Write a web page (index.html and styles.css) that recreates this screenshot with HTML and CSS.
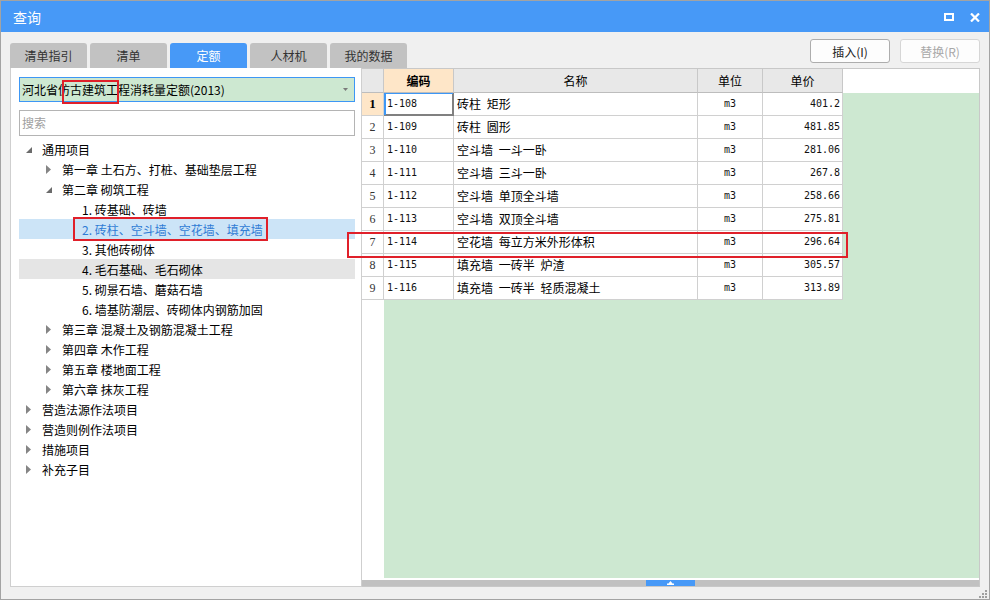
FILE: index.html
```html
<!DOCTYPE html>
<html lang="zh">
<head>
<meta charset="utf-8">
<title>查询</title>
<link rel="stylesheet" href="styles.css">
</head>
<body>
<div class="window">
  <div class="titlebar">
    <span class="title">查询</span>
    <div class="win-btns">
      <svg class="ic" width="10" height="8" viewBox="0 0 10 8"><rect x="1" y="1" width="8" height="6" fill="none" stroke="#fff" stroke-width="2"/></svg>
      <svg class="ic" width="10" height="9" viewBox="0 0 10 9"><path d="M1 0.5 L9 8.5 M9 0.5 L1 8.5" stroke="#fff" stroke-width="2.2" fill="none"/></svg>
    </div>
  </div>
  <div class="content">
    <div class="toolbar">
      <div class="tabs">
        <div class="tab">清单指引</div>
        <div class="tab">清单</div>
        <div class="tab active">定额</div>
        <div class="tab">人材机</div>
        <div class="tab">我的数据</div>
      </div>
      <div class="actions">
        <button class="btn">插入(I)</button>
        <button class="btn disabled">替换(R)</button>
      </div>
    </div>
    <div class="main">
      <div class="left">
        <div class="combo">
          <span>河北省仿古建筑工程消耗量定额(2013)</span>
          <svg class="combo-arrow" width="5" height="3" viewBox="0 0 5 3"><polygon points="0,0 5,0 2.5,3" fill="#7a7a7a"/></svg>
        </div>
        <div class="search">搜索</div>
        <ul class="tree">
          <li class="node l0"><span class="tg"><svg class="exp" width="6" height="6" viewBox="0 0 6 6"><polygon points="6,0 6,6 0,6" fill="#6b6b6b"/></svg></span>通用项目</li>
          <li class="node l1"><span class="tg"><svg class="col" width="5" height="9" viewBox="0 0 5 9"><polygon points="0,0 5,4.5 0,9" fill="#858585"/></svg></span>第一章 土石方、打桩、基础垫层工程</li>
          <li class="node l1"><span class="tg"><svg class="exp" width="6" height="6" viewBox="0 0 6 6"><polygon points="6,0 6,6 0,6" fill="#6b6b6b"/></svg></span>第二章 砌筑工程</li>
          <li class="node l2"><span class="tg"></span>1. 砖基础、砖墙</li>
          <li class="node l2 selected"><span class="tg"></span>2. 砖柱、空斗墙、空花墙、填充墙</li>
          <li class="node l2"><span class="tg"></span>3. 其他砖砌体</li>
          <li class="node l2 hover"><span class="tg"></span>4. 毛石基础、毛石砌体</li>
          <li class="node l2"><span class="tg"></span>5. 砌景石墙、蘑菇石墙</li>
          <li class="node l2"><span class="tg"></span>6. 墙基防潮层、砖砌体内钢筋加固</li>
          <li class="node l1"><span class="tg"><svg class="col" width="5" height="9" viewBox="0 0 5 9"><polygon points="0,0 5,4.5 0,9" fill="#858585"/></svg></span>第三章 混凝土及钢筋混凝土工程</li>
          <li class="node l1"><span class="tg"><svg class="col" width="5" height="9" viewBox="0 0 5 9"><polygon points="0,0 5,4.5 0,9" fill="#858585"/></svg></span>第四章 木作工程</li>
          <li class="node l1"><span class="tg"><svg class="col" width="5" height="9" viewBox="0 0 5 9"><polygon points="0,0 5,4.5 0,9" fill="#858585"/></svg></span>第五章 楼地面工程</li>
          <li class="node l1"><span class="tg"><svg class="col" width="5" height="9" viewBox="0 0 5 9"><polygon points="0,0 5,4.5 0,9" fill="#858585"/></svg></span>第六章 抹灰工程</li>
          <li class="node l0"><span class="tg"><svg class="col" width="5" height="9" viewBox="0 0 5 9"><polygon points="0,0 5,4.5 0,9" fill="#858585"/></svg></span>营造法源作法项目</li>
          <li class="node l0"><span class="tg"><svg class="col" width="5" height="9" viewBox="0 0 5 9"><polygon points="0,0 5,4.5 0,9" fill="#858585"/></svg></span>营造则例作法项目</li>
          <li class="node l0"><span class="tg"><svg class="col" width="5" height="9" viewBox="0 0 5 9"><polygon points="0,0 5,4.5 0,9" fill="#858585"/></svg></span>措施项目</li>
          <li class="node l0"><span class="tg"><svg class="col" width="5" height="9" viewBox="0 0 5 9"><polygon points="0,0 5,4.5 0,9" fill="#858585"/></svg></span>补充子目</li>
        </ul>
      </div>
      <div class="right">
        <div class="ghead">
          <div class="hc rn"></div>
          <div class="hc code">编码</div>
          <div class="hc name">名称</div>
          <div class="hc unit">单位</div>
          <div class="hc price">单价</div>
        </div>
        <div class="gbody">
          <div class="rncol">
            <div class="rc first">1</div>
            <div class="rc">2</div>
            <div class="rc">3</div>
            <div class="rc">4</div>
            <div class="rc">5</div>
            <div class="rc">6</div>
            <div class="rc">7</div>
            <div class="rc">8</div>
            <div class="rc">9</div>
          </div>
          <div class="darea">
            <div class="row"><div class="c code focus">1-108</div><div class="c name">砖柱 矩形</div><div class="c unit">m3</div><div class="c price">401.2</div></div>
            <div class="row"><div class="c code">1-109</div><div class="c name">砖柱 圆形</div><div class="c unit">m3</div><div class="c price">481.85</div></div>
            <div class="row"><div class="c code">1-110</div><div class="c name">空斗墙 一斗一卧</div><div class="c unit">m3</div><div class="c price">281.06</div></div>
            <div class="row"><div class="c code">1-111</div><div class="c name">空斗墙 三斗一卧</div><div class="c unit">m3</div><div class="c price">267.8</div></div>
            <div class="row"><div class="c code">1-112</div><div class="c name">空斗墙 单顶全斗墙</div><div class="c unit">m3</div><div class="c price">258.66</div></div>
            <div class="row"><div class="c code">1-113</div><div class="c name">空斗墙 双顶全斗墙</div><div class="c unit">m3</div><div class="c price">275.81</div></div>
            <div class="row"><div class="c code">1-114</div><div class="c name">空花墙 每立方米外形体积</div><div class="c unit">m3</div><div class="c price">296.64</div></div>
            <div class="row"><div class="c code">1-115</div><div class="c name">填充墙 一砖半 炉渣</div><div class="c unit">m3</div><div class="c price">305.57</div></div>
            <div class="row"><div class="c code">1-116</div><div class="c name">填充墙 一砖半 轻质混凝土</div><div class="c unit">m3</div><div class="c price">313.89</div></div>
          </div>
        </div>
        <div class="hscroll">
          <div class="thumb"><svg width="7" height="4" viewBox="0 0 7 4"><polygon points="3.5,0 5.5,2.5 7,2.5 7,4 0,4 0,2.5 1.5,2.5" fill="#fff"/></svg></div>
        </div>
      </div>
    </div>
  </div>
  <div class="grip">
    <svg width="8" height="8" viewBox="0 0 8 8" fill="#a0a0a0"><rect x="6" y="0" width="2" height="2"/><rect x="3" y="3" width="2" height="2"/><rect x="6" y="3" width="2" height="2"/><rect x="0" y="6" width="2" height="2"/><rect x="3" y="6" width="2" height="2"/><rect x="6" y="6" width="2" height="2"/></svg>
  </div>
  <div class="mark mark-combo"></div>
  <div class="mark mark-tree"></div>
  <div class="mark mark-row"></div>
</div>
</body>
</html>
```

FILE: styles.css
```css
* { box-sizing: border-box; margin: 0; padding: 0; }
html, body { width: 990px; height: 600px; overflow: hidden; }
body {
  font-family: "Noto Sans CJK SC", "Noto Sans", sans-serif;
  font-size: 12px;
  color: #000;
  background: #f0f0f0;
}
.window {
  position: relative;
  width: 990px;
  height: 600px;
  border: 1px solid #a3a3a3;
  background: #f0f0f0;
  display: flex;
  flex-direction: column;
}
.titlebar {
  height: 31px;
  background: #4799f7;
  color: #fff;
  display: flex;
  align-items: center;
  justify-content: space-between;
  padding: 1px 9px 0 12px;
}
.title { font-size: 14px; line-height: 20px; }
.win-btns { display: flex; align-items: center; gap: 16px; }
.ic { display: block; }

.content {
  flex: 1;
  display: flex;
  flex-direction: column;
  padding: 0 9px 12px 9px;
}
.toolbar {
  height: 36px;
  display: flex;
  justify-content: space-between;
}
.tabs { display: flex; align-items: flex-end; gap: 3px; }
.tab {
  width: 77px;
  height: 25px;
  line-height: 25px;
  text-align: center;
  background: #c2c2c2;
  color: #333;
  border-radius: 3px 3px 0 0;
  font-size: 12px;
}
.tab.active { background: #4799f7; color: #fff; }
.actions { display: flex; gap: 10px; padding-top: 7px; }
.btn {
  width: 80px;
  height: 24px;
  background: #fdfdfd;
  border: 1px solid #adadad;
  border-radius: 3px;
  font-family: "Noto Sans CJK SC", "Noto Sans", sans-serif;
  font-size: 12px;
  color: #222;
}
.btn.disabled { border-color: #d6d6d6; color: #a8a8a8; }

.main { height: 519px; display: flex; }
.left {
  width: 352px;
  background: #fff;
  border: 1px solid #cfcfcf;
  border-top: none;
  padding: 9px 6px 0 8px;
}
.combo {
  height: 25px;
  border: 1px solid #3d97f5;
  background: #cde8d1;
  display: flex;
  align-items: center;
  justify-content: space-between;
  padding: 0 6px 0 2px;
  font-size: 12px;
}
.combo-arrow { display: block; }
.search {
  margin-top: 8px;
  height: 26px;
  border: 1px solid #b4b4b4;
  color: #a0a0a0;
  padding-left: 2px;
  line-height: 24px;
}
.tree { list-style: none; margin-top: 3px; }
.node {
  height: 20px;
  display: flex;
  align-items: center;
  white-space: nowrap;
}
.node.l1 { padding-left: 20px; }
.node.l2 { padding-left: 40px; }
.tg { width: 23px; height: 20px; display: flex; align-items: center; flex: none; }
.tg .exp { margin-left: 7px; margin-top: 2px; }
.tg .col { margin-left: 7px; }
.node.selected { background: #cce4f7; color: #2f7cd5; }
.node.hover { background: #e5e5e5; }

.right {
  flex: 1;
  background: #fff;
  border: 1px solid #c8c8c8;
  border-left: none;
  display: flex;
  flex-direction: column;
}
.ghead { height: 24px; display: flex; flex: none; }
.hc {
  height: 24px;
  background: #e8e8e8;
  border-right: 1px solid #c8c8c8;
  border-bottom: 1px solid #bdbdbd;
  text-align: center;
  line-height: 23px;
  font-size: 12px;
}
.rn { width: 22px; }
.code { width: 70px; }
.name { width: 244px; }
.unit { width: 65px; }
.price { width: 80px; }
.hc.code { background: #fee6c8; font-weight: bold; }

.gbody { flex: 1; display: flex; min-height: 0; }
.rncol { width: 22px; background: #fff; flex: none; }
.rc {
  height: 23px;
  border-right: 1px solid #d0d0d0;
  border-bottom: 1px solid #d0d0d0;
  text-align: center;
  line-height: 22px;
  font-family: "Liberation Serif", serif;
  font-size: 12px;
  color: #333;
}
.rc.first { background: #fee6c8; font-weight: bold; font-size: 13px; color: #000; }
.darea { flex: 1; background: #cde8d1; }
.row { display: flex; width: 459px; background: #fff; }
.c {
  height: 23px;
  border-right: 1px solid #d0d0d0;
  border-bottom: 1px solid #d0d0d0;
  line-height: 22px;
  white-space: nowrap;
}
.c.code, .c.unit, .c.price {
  font-family: "DejaVu Sans Mono", monospace;
  font-size: 10px;
  color: #111;
}
.c.code { padding-left: 3px; }
.c.name { padding-left: 3px; font-size: 12px; word-spacing: 3px; }
.c.unit { text-align: center; }
.c.price { text-align: right; padding-right: 2px; }
.c.focus {
  box-shadow: inset 2px 0 0 #3d97f5, inset 0 1px 0 #3d97f5, inset -1px 0 0 #808080, inset 0 -1px 0 #808080;
  border-right-color: #808080;
  border-bottom-color: #808080;
}
.hscroll {
  height: 6px;
  margin-top: 2px;
  background: #c1c1c1;
  display: flex;
  flex: none;
}
.thumb {
  margin-left: 284px;
  width: 49px;
  height: 6px;
  background: #4799f7;
  display: flex;
  align-items: center;
  justify-content: center;
}
.thumb svg { display: block; }

.grip { position: absolute; right: 2px; bottom: 1px; }
.grip svg { display: block; }

.mark { position: absolute; border: 2px solid #e0202a; }
.mark-combo { left: 61px; top: 79px; width: 57px; height: 24px; }
.mark-tree { left: 72px; top: 216px; width: 195px; height: 24px; }
.mark-row { left: 346px; top: 231px; width: 501px; height: 26px; }
```
